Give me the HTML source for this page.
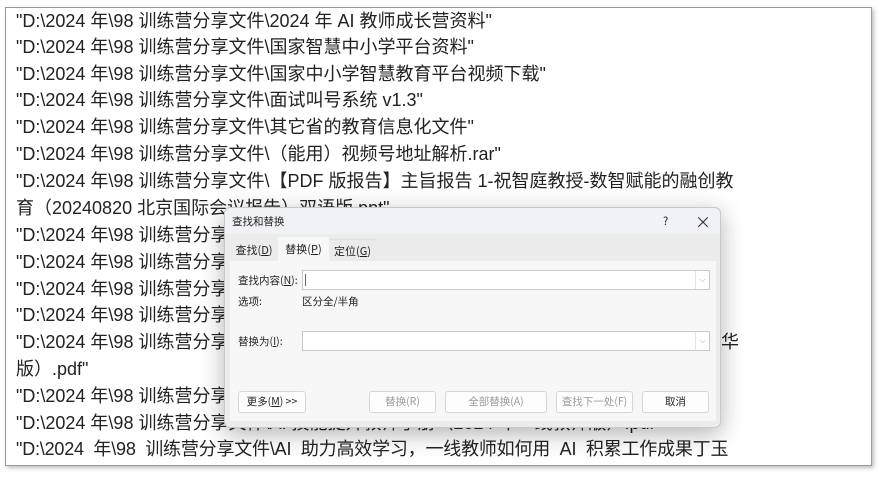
<!DOCTYPE html>
<html><head><meta charset="utf-8"><style>
*{margin:0;padding:0;box-sizing:border-box}
body{width:882px;height:481px;background:#fff;position:relative;overflow:hidden;font-family:"Liberation Sans","Noto Sans CJK SC",sans-serif}
.frame{position:absolute;left:5px;top:7px;width:867px;height:459px;border:1px solid #9a9a9a;box-shadow:2px 2px 4px rgba(0,0,0,.25);background:#fff;overflow:hidden}
.l{position:absolute;left:10px;font-size:18px;color:#222;white-space:nowrap;line-height:20px}
.dlg{position:absolute;left:224px;top:207px;width:497px;height:221px;background:#ececec;border:1px solid #c8c8c8;border-radius:6px;box-shadow:0 6px 24px rgba(0,0,0,.3);font-size:10.5px;color:#222;font-family:"Noto Sans CJK SC",sans-serif}
.tb{position:absolute;left:0;top:0;right:0;height:26px;background:#f0f2f6;border-radius:6px 6px 0 0}
.a{position:absolute;white-space:nowrap}
.tab{position:absolute;top:31px;height:22px;line-height:22px;text-align:center;font-size:11px}
.panel{position:absolute;left:5px;top:53px;width:486px;height:160px;background:#f7f7f7}
.inp{position:absolute;height:20px;background:#fff;border:1px solid #c9c9c9}
.inp i{position:absolute;right:0;top:0;width:14px;height:18px;border-left:1px solid #e4e4e4;color:#aaa;font-style:normal;font-size:8px;text-align:center;line-height:18px}
.btn{position:absolute;top:183px;height:22px;background:#fdfdfd;border:1px solid #d6d6d6;border-radius:3px;text-align:center;line-height:20px;font-size:10.5px}
.dis{color:#9a9a9a}
</style></head><body>
<div class="frame">
<div class="l" style="top:3px">"D:\2024 年\98 训练营分享文件\2024 年 AI 教师成长营资料"</div>
<div class="l" style="top:29px">"D:\2024 年\98 训练营分享文件\国家智慧中小学平台资料"</div>
<div class="l" style="top:56px">"D:\2024 年\98 训练营分享文件\国家中小学智慧教育平台视频下载"</div>
<div class="l" style="top:82px">"D:\2024 年\98 训练营分享文件\面试叫号系统 v1.3"</div>
<div class="l" style="top:109px">"D:\2024 年\98 训练营分享文件\其它省的教育信息化文件"</div>
<div class="l" style="top:136px">"D:\2024 年\98 训练营分享文件\（能用）视频号地址解析.rar"</div>
<div class="l" style="top:163px">"D:\2024 年\98 训练营分享文件\【PDF 版报告】主旨报告 1-祝智庭教授-数智赋能的融创教</div>
<div class="l" style="top:190px">育（20240820 北京国际会议报告）双语版.ppt"</div>
<div class="l" style="top:217px">"D:\2024 年\98 训练营分享文件</div>
<div class="l" style="top:244px">"D:\2024 年\98 训练营分享文件</div>
<div class="l" style="top:271px">"D:\2024 年\98 训练营分享文件</div>
<div class="l" style="top:297px">"D:\2024 年\98 训练营分享文件</div>
<div class="l" style="top:324px">"D:\2024 年\98 训练营分享文件</div>
<div class="l" style="top:324px;left:715px">华</div>
<div class="l" style="top:351px">版）.pdf"</div>
<div class="l" style="top:378px">"D:\2024 年\98 训练营分享文件</div>
<div class="l" style="top:405px">"D:\2024 年\98 训练营分享文件\AI 技能提升教师手册（2024 年一线教师版）.pdf"</div>
<div class="l" style="top:431px;letter-spacing:-0.2px">"D:\2024&nbsp; 年\98&nbsp; 训练营分享文件\AI&nbsp; 助力高效学习，一线教师如何用&nbsp; AI&nbsp; 积累工作成果丁玉</div>
</div>
<div class="dlg">
<div class="tb"></div>
<div class="a" style="left:7px;top:6px;font-size:10.5px">查找和替换</div>
<div class="a" style="left:438px;top:5px;font-size:11px">?</div>
<div class="a" style="left:470px;top:1px;font-size:16px;color:#333">×</div>
<div class="tab" style="left:5px;width:48px">查找(<u>D</u>)</div>
<div class="tab" style="left:53px;width:51px;background:#f7f7f7;top:29px;height:24px;line-height:24px">替换(<u>P</u>)</div>
<div class="tab" style="left:104px;width:47px;background:#ebebeb;border-top:1px solid #e0e0e0">定位(<u>G</u>)</div>
<div class="panel"></div>
<div class="a" style="left:13px;top:65px">查找内容(<u>N</u>):</div>
<div class="inp" style="left:77px;top:62px;width:408px"><span style="position:absolute;left:2px;top:3px;width:1px;height:12px;background:#666"></span><i>⌵</i></div>
<div class="a" style="left:13px;top:86px">选项:</div>
<div class="a" style="left:77px;top:86px">区分全/半角</div>
<div class="a" style="left:13px;top:126px">替换为(<u>I</u>):</div>
<div class="inp" style="left:77px;top:123px;width:408px"><i>⌵</i></div>
<div class="btn" style="left:13px;width:68px">更多(<u>M</u>) &gt;&gt;</div>
<div class="btn dis" style="left:144px;width:67px">替换(R)</div>
<div class="btn dis" style="left:220px;width:102px">全部替换(A)</div>
<div class="btn dis" style="left:331px;width:77px">查找下一处(F)</div>
<div class="btn" style="left:417px;width:67px">取消</div>
</div>
</body></html>
